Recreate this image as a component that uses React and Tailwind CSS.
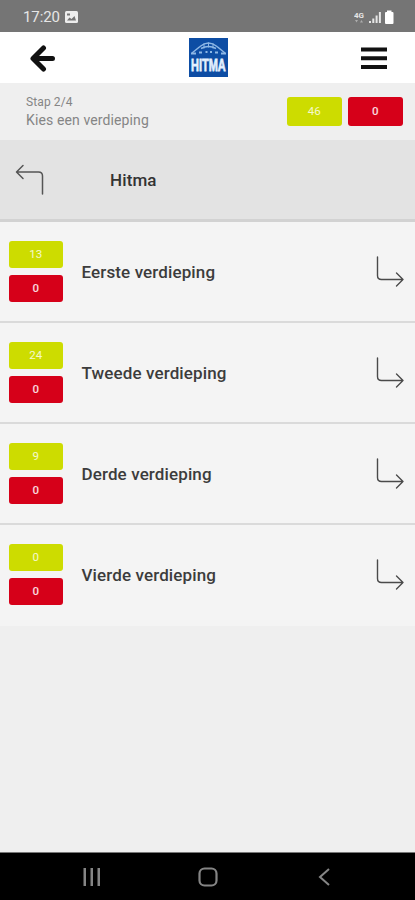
import React from 'react';

const floors = [
  { name: 'Eerste verdieping', open: 13, failed: 0 },
  { name: 'Tweede verdieping', open: 24, failed: 0 },
  { name: 'Derde verdieping', open: 9, failed: 0 },
  { name: 'Vierde verdieping', open: 0, failed: 0 },
];

const badgeColors = {
  green: 'bg-[#cddc00] text-white/80',
  red: 'bg-[#d60019] font-medium text-white/85',
};

const Badge = ({ color, size = 'h-[27px]', children }) => (
  <span className={`flex w-[54.5px] items-center justify-center rounded-[3px] pt-px text-[11.5px] ${size} ${badgeColors[color]}`}>
    {children}
  </span>
);

const StatusBar = () => (
  <div className="flex h-8 items-center justify-between bg-[#757575] pr-[21px] pl-[23px] text-[#e6e6e6]">
    <div className="flex items-center gap-[5px] pt-[2px]">
      <span className="text-[15px] tracking-[-0.1px]">17:20</span>
      <svg width="13" height="12" viewBox="0 0 13 12">
        <rect width="13" height="12" rx="1.5" fill="#ededed" />
        <path d="M2 9.5 4.5 6.5 6.5 8 9.5 5 11 9.5z" fill="#757575" />
        <path d="M2 2.5h3v2H2z" fill="#757575" />
      </svg>
    </div>
    <div className="flex items-center pt-[2px]">
      <svg width="40" height="15" viewBox="0 0 40 15" fill="#e6e6e6">
        <text x="0" y="7.5" fontSize="8" fontWeight="700" textLength="10" lengthAdjust="spacingAndGlyphs">4G</text>
        <path d="M1 10h3l-1.5 2.5zM6 12.5h3L7.5 10z" opacity=".5" />
        <path d="M15 11h2v2h-2zM18.3 8.5h2V13h-2zM21.6 5.5h2V13h-2zM24.9 2h2v11h-2z" />
        <path d="M33 .5h4.5v1.5h1a1 1 0 0 1 1 1V13a1 1 0 0 1-1 1h-6.5a1 1 0 0 1-1-1V3a1 1 0 0 1 1-1h1z" fill="#fff" />
      </svg>
    </div>
  </div>
);

const Logo = () => (
  <svg width="39" height="39" viewBox="0 0 39 39">
    <rect width="39" height="39" fill="#0d4da4" />
    <g fill="none" stroke="#8db7e5" strokeWidth="1.5">
      <path d="M11 8.5Q19.5 1.5 28 8.5M11 8.5 3 15M28 8.5l8 6.5M12 10.5q7.5-4 15 0" />
      <path d="M15 5.5v5M19.5 4.5v5M24 5.5v5" strokeWidth="1" />
      <path d="M2 15.5h5M10 14.5h3M16.5 14h2M21 14h2M26 14.5h3M32 15.5h5" strokeWidth="2.2" />
    </g>
    <text transform="translate(2 32.5) scale(1 1.5)" fill="#e4f1ff" stroke="#e4f1ff" strokeWidth=".5" fontFamily="Liberation Sans, sans-serif" fontSize="11" fontWeight="700">HITMA</text>
  </svg>
);

const Header = () => (
  <header className="flex h-[51px] items-center justify-between bg-white px-[28px]">
    <svg width="28" height="28" viewBox="0 0 28 28" fill="none" stroke="#111" strokeWidth="5" strokeLinecap="round" strokeLinejoin="round">
      <path d="M15.5 4 5 14.5l10.5 10.5M6 14.5h18.5" />
    </svg>
    <Logo />
    <svg width="27" height="24" viewBox="0 0 27 24" fill="#111">
      <path d="M1 1.5h26v4H1zM1 10.2h26v4H1zM1 18.900h26v4H1z" />
    </svg>
  </header>
);

const ForwardIcon = () => (
  <svg width="30" height="34" viewBox="0 0 30 34" fill="none" stroke="#4a4a4a" strokeWidth="1.4" strokeLinecap="round" strokeLinejoin="round">
    <path d="M2.5 2v18.5q0 4 4 4H28M21.5 18l6.5 6.5-6.5 6.5" />
  </svg>
);

const ReturnIcon = () => (
  <svg width="30" height="32" viewBox="0 0 30 32" fill="none" stroke="#555" strokeWidth="1.5" strokeLinecap="round" strokeLinejoin="round">
    <path d="M27.5 30V12q0-4-4-4H2M8 1.5 1.5 8l6.5 6.5" />
  </svg>
);

const FloorRow = ({ floor }) => (
  <li className="flex h-[101px] items-center border-b-2 border-[#dadada] bg-[#f4f4f4] pr-[10px] pl-[8.5px] last:border-[#f4f4f4]">
    <div className="flex flex-col gap-[7px]">
      <Badge color="green">{floor.open}</Badge>
      <Badge color="red">{floor.failed}</Badge>
    </div>
    <span className="ml-[18.5px] flex-1 pt-[3px] text-[17px] font-medium tracking-[0.12px] text-[#3c3c3c]">{floor.name}</span>
    <ForwardIcon />
  </li>
);

const NavBar = () => (
  <nav className="flex h-12 items-center justify-between border-t border-[#777] bg-black pr-[85px] pl-[83px]">
    <svg width="18" height="18" viewBox="0 0 18 18" fill="#858585">
      <path d="M.5 0H3v18H.5zM7.5 0H10v18H7.5zM14.5 0H17v18h-2.5z" />
    </svg>
    <svg className="-ml-[3px]" width="20" height="20" viewBox="0 0 20 20" fill="none" stroke="#858585" strokeWidth="2.2">
      <rect x="1.5" y="1.5" width="17" height="17" rx="5" />
    </svg>
    <svg width="12" height="18" viewBox="0 0 12 18" fill="none" stroke="#858585" strokeWidth="2">
      <path d="M11 1 2 9l9 8" />
    </svg>
  </nav>
);

const App = () => (
  <div className="flex h-screen flex-col bg-[#efefef] font-[Roboto,sans-serif]">
    <StatusBar />
    <Header />
    <div className="flex h-[57px] items-center justify-between bg-[#efefef] pr-[12.5px] pl-[26px]">
      <div className="text-[#858585]">
        <p className="text-[12px] leading-[16px] tracking-[0.1px]">Stap 2/4</p>
        <p className="text-[14px] leading-[20px] tracking-[0.12px]">Kies een verdieping</p>
      </div>
      <div className="flex gap-[6.5px]">
        <Badge color="green" size="h-[29px]">46</Badge>
        <Badge color="red" size="h-[29px]">0</Badge>
      </div>
    </div>
    <div className="flex h-[82px] items-center border-b-[3px] border-[#d2d2d2] bg-[#e3e3e3] pl-[15px]">
      <ReturnIcon />
      <h1 className="ml-[65px] pt-[2px] text-[17px] font-medium tracking-[0.12px] text-[#333]">Hitma</h1>
    </div>
    <ul className="flex-1">
      {floors.map(floor => (
        <FloorRow key={floor.name} floor={floor} />
      ))}
    </ul>
    <NavBar />
  </div>
);

export default App;
